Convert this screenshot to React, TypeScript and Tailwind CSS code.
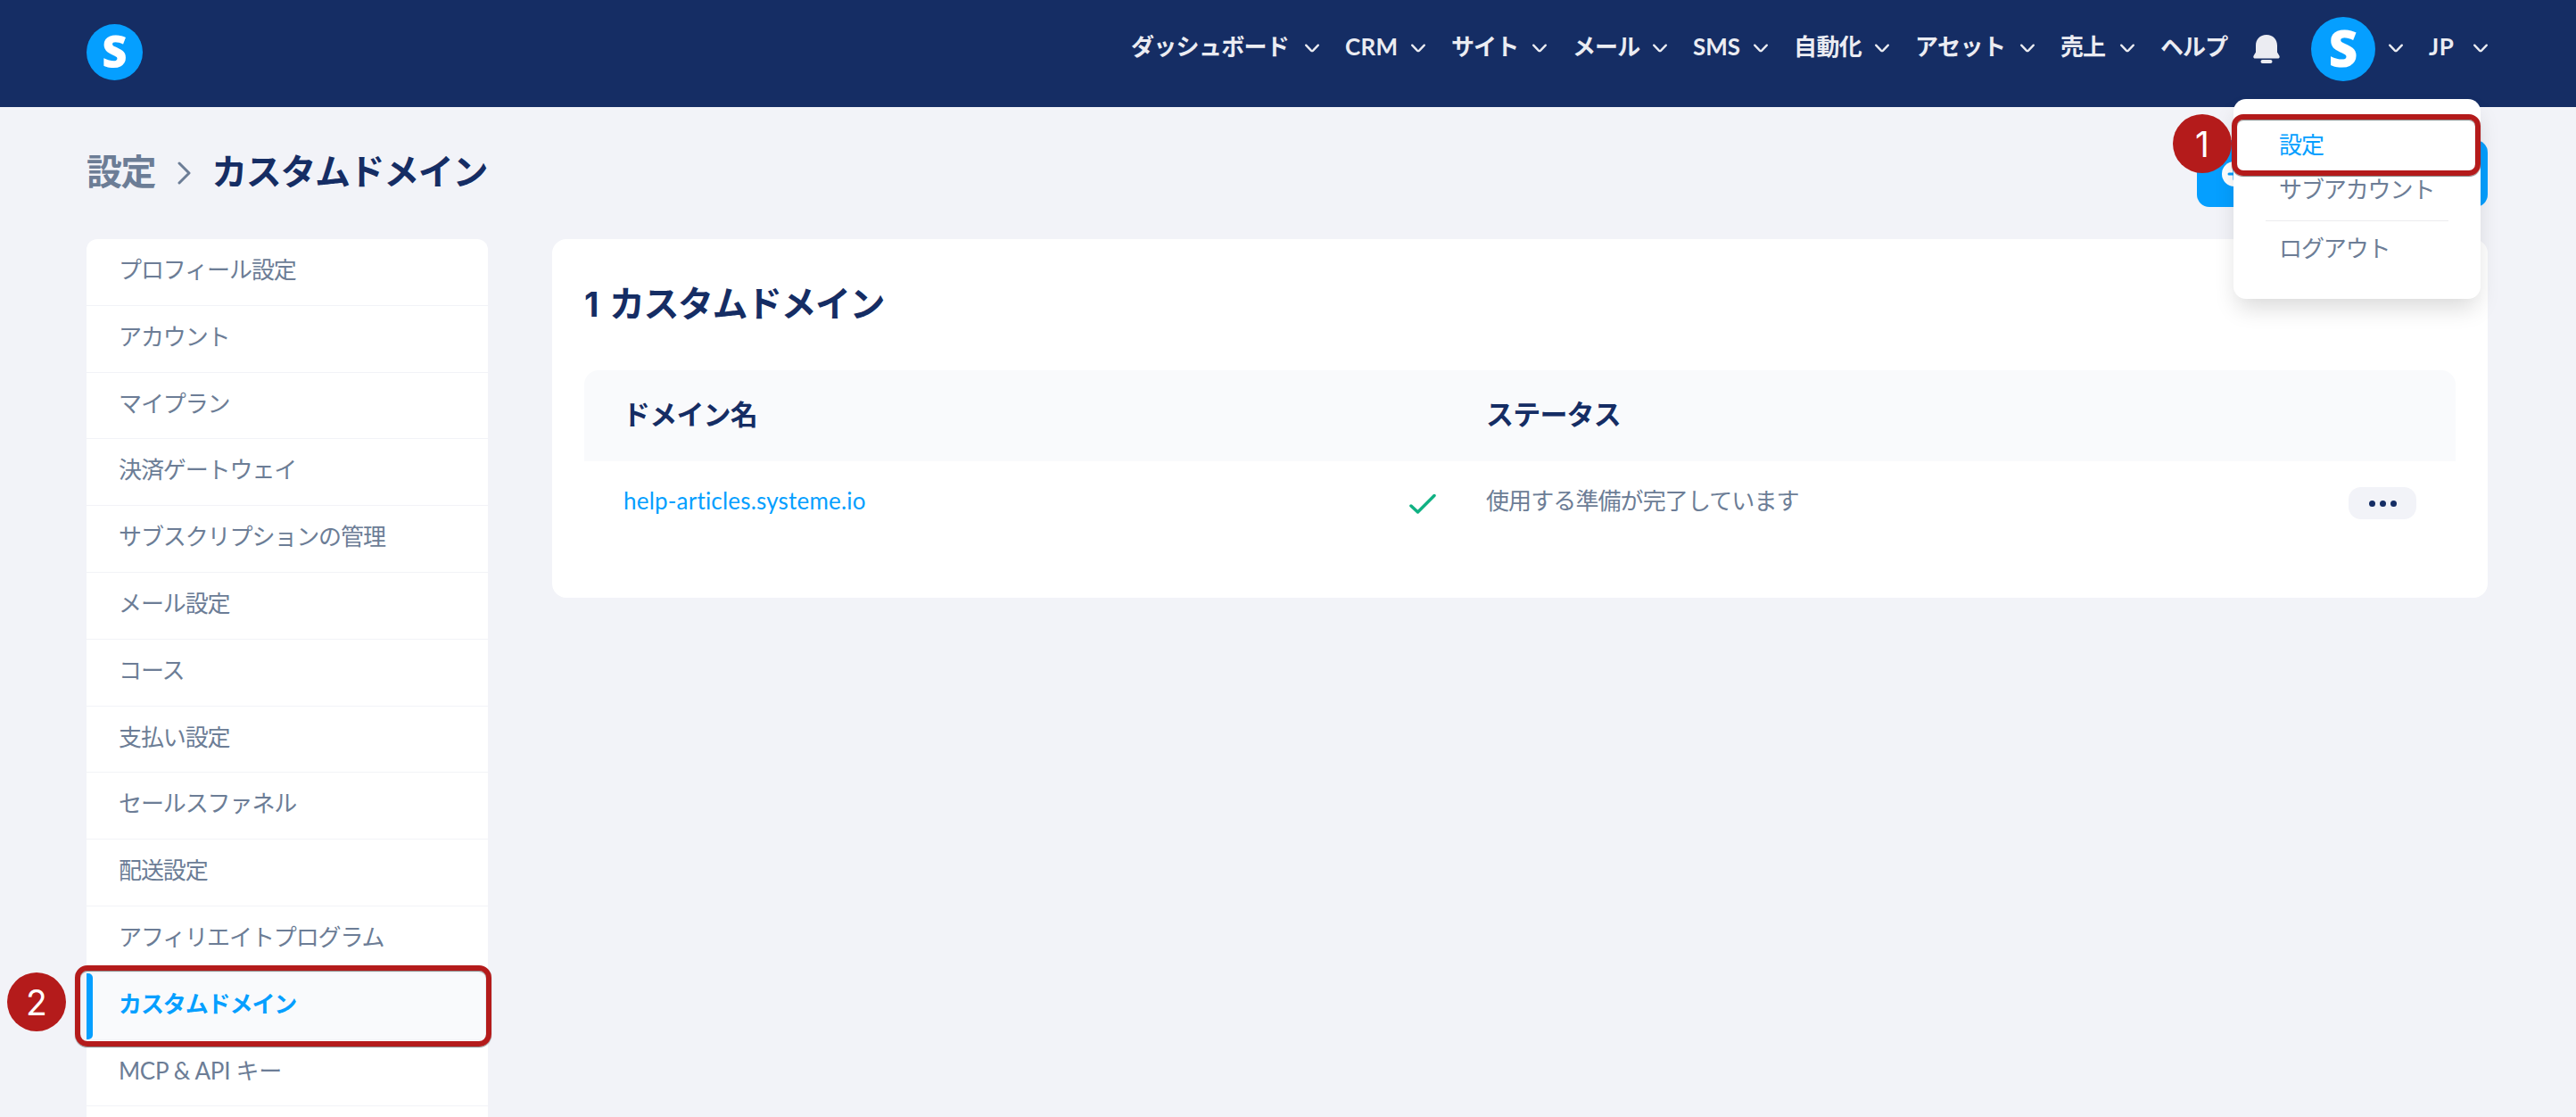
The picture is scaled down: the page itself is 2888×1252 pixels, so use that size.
const navItems = [
    { label: "ダッシュボード", width: "w-[211px]", text: "tracking-[-0.7px]" },
    { label: "CRM", width: "w-[90px]", text: "tracking-[0.3px]" },
    { label: "サイト", width: "w-[107px]", text: "" },
    { label: "メール", width: "w-[106px]", text: "" },
    { label: "SMS", width: "w-[84px]", text: "tracking-normal" },
    { label: "自動化", width: "w-[107px]", text: "tracking-[-0.6px]" },
    { label: "アセット", width: "w-[134px]", text: "tracking-[-0.5px]" },
    { label: "売上", width: "w-[83px]", text: "" },
];

const sidebarItems = [
    "プロフィール設定",
    "アカウント",
    "マイプラン",
    "決済ゲートウェイ",
    "サブスクリプションの管理",
    "メール設定",
    "コース",
    "支払い設定",
    "セールスファネル",
    "配送設定",
    "アフィリエイトプログラム",
    "カスタムドメイン",
    "MCP & API キー",
];

const activeItem = "カスタムドメイン";

const Chevron = () => (
    <svg className="mt-1 h-2.5 w-4 shrink-0" viewBox="0 0 16 10" fill="none" stroke="currentColor" strokeWidth="2.3" strokeLinecap="round" strokeLinejoin="round">
        <path d="M1.2 1.6 L6.9 7.6 Q8 8.7 9.1 7.6 L14.8 1.6" />
    </svg>
);

const Bell = () => (
    <svg className="h-8 w-[30px]" viewBox="0 0 30 32" fill="currentColor">
        <path d="M15 0C7.6 0 3 5.4 3 12v7.4L.6 23.6C-.2 25.3.6 26.6 2.4 26.6h25.2c1.8 0 2.6-1.3 1.8-3L27 19.4V12C27 5.4 22.4 0 15 0Z" />
        <rect x="8.5" y="28" width="13" height="4" rx="2" />
    </svg>
);

const Logo = ({ className }: { className: string }) => (
    <div className={`flex shrink-0 justify-center rounded-full bg-[#059fff] font-['Open_Sans',sans-serif] font-extrabold tracking-normal text-white ${className}`}>
        S
    </div>
);

const StepBadge = ({ step, className }: { step: number; className: string }) => (
    <div className={`absolute z-30 flex size-[66px] items-center justify-center rounded-full bg-[#b41b1b] font-[Inter,sans-serif] text-[39px] leading-none tracking-normal text-white ${className}`}>
        {step}
    </div>
);

const UserMenu = () => (
    <div className="absolute top-[111px] right-[107px] z-20 h-[224px] w-[277px] rounded-[14px] bg-white pt-[34px] tracking-[-1.1px] text-[#6c7d96] shadow-[0_14px_26px_-4px_rgba(0,0,0,0.15)]">
        <div className="h-[34px] pl-[51px] leading-[34px] text-[#059fff]">設定</div>
        <div className="mt-4 h-[34px] pl-[51px] leading-[34px]">サブアカウント</div>
        <div className="mx-9 mt-[18px] h-px bg-[#ebecee]" />
        <div className="mt-[13px] h-[34px] pl-[51px] leading-[34px]">ログアウト</div>
        <div className="absolute top-[17px] -left-0.5 h-[69px] w-[279px] rounded-[13px] border-6 border-[#b41b1b] shadow-[0_1px_1px_rgba(0,0,0,0.5),inset_0_1px_1px_rgba(0,0,0,0.5)]" />
        <StepBadge step={1} className="top-[17px] -left-[68px]" />
    </div>
);

const Header = () => (
    <header className="relative flex h-[120px] items-start justify-between bg-[#152d64] pr-[99px] pl-[97px]">
        <Logo className="mt-[27px] size-[63px] text-[49px] leading-[61px]" />
        <nav className="flex h-[104px] items-center text-[26px] font-bold tracking-[-0.9px] text-[#ebecf2]">
            <div className="flex gap-[29px]">
                {navItems.map(item => (
                    <div key={item.label} className={`flex items-center justify-between whitespace-nowrap ${item.width}`}>
                        <span className={item.text}>{item.label}</span>
                        <Chevron />
                    </div>
                ))}
            </div>
            <span className="ml-[29px] w-[104px] whitespace-nowrap">ヘルプ</span>
            <div className="mt-1.5"><Bell /></div>
            <Logo className="mt-1.5 mr-[15px] ml-[35px] size-[72px] text-[57px] leading-[68px]" />
            <Chevron />
            <span className="ml-[29px] w-[50px] tracking-[0.5px]">JP</span>
            <Chevron />
        </nav>
        <UserMenu />
    </header>
);

const Sidebar = () => (
    <aside className="h-[984px] w-[450px] shrink-0 overflow-hidden rounded-t-[12px] bg-white tracking-[-1.1px]">
        {sidebarItems.map(item => {
            const active = item === activeItem;
            return (
                <div key={item} className={`flex h-[74.8px] border-b border-[#f2f3f7] ${active ? "bg-[#f9fafc] font-bold text-[#059fff]" : ""}`}>
                    <div className={`h-full w-[7px] rounded-r-[5px] ${active ? "bg-[#059fff]" : ""}`} />
                    <span className={`pl-[29px] leading-[68px] whitespace-nowrap ${item.startsWith("MCP") ? "tracking-[-0.3px]" : ""}`}>{item}</span>
                </div>
            );
        })}
    </aside>
);

const DomainsCard = () => (
    <section className="h-[402px] flex-1 rounded-[16px] bg-white px-9 pt-[46px]">
        <h2 className="h-[52px] text-[40px] leading-[52px] font-bold tracking-[-1.5px] whitespace-nowrap text-[#152d64]">
            <span className="mr-2 inline-block w-5 font-[Inter,sans-serif] text-[38px]">1</span>
            カスタムドメイン
        </h2>
        <div className="mt-[49px] flex h-[102px] items-center rounded-t-[16px] bg-[#f9fafc] text-[31px] font-bold tracking-[-0.8px] text-[#152d64]">
            <div className="w-[1011px] pb-1 pl-[43px]">ドメイン名</div>
            <div className="pb-1">ステータス</div>
        </div>
        <div className="flex h-[94px] items-center pr-11 pl-11">
            <a className="w-[881px] pb-1.5 tracking-[0.2px] text-[#059fff]">help-articles.systeme.io</a>
            <svg className="mt-0.5 h-6 w-[30px]" viewBox="0 0 30 24" fill="none" stroke="#10b183" strokeWidth="3.5" strokeLinecap="round" strokeLinejoin="round">
                <path d="M2 14 L9.5 21 L28 2.5" />
            </svg>
            <span className="flex-1 pb-1.5 pl-[56px]">使用する準備が完了しています</span>
            <button className="flex h-9 w-[76px] items-center justify-center gap-[5px] rounded-[14px] bg-[#f2f3f8]">
                <span className="size-[7px] rounded-full bg-[#152d64]" />
                <span className="size-[7px] rounded-full bg-[#152d64]" />
                <span className="size-[7px] rounded-full bg-[#152d64]" />
            </button>
        </div>
    </section>
);

const App = () => {
    return (
        <div className="relative h-[1252px] w-[2888px] overflow-hidden bg-[#f2f3f8] font-[Lato,'Noto_Sans_CJK_JP',sans-serif] text-[26px] tracking-[-0.9px] text-[#6c7d96]">
            <Header />
            <div className="flex h-[148px] justify-between pr-[99px] pl-[97px]">
                <div className="flex h-[144px] items-center text-[40px] font-bold tracking-[-1.4px]">
                    <span>設定</span>
                    <svg className="mt-1 mr-[22px] ml-[25px] h-7 w-4" viewBox="0 0 16 28" fill="none" stroke="currentColor" strokeWidth="3" strokeLinecap="round" strokeLinejoin="round">
                        <path d="M2 3 L13 14 L2 25" />
                    </svg>
                    <h1 className="text-[#152d64]">カスタムドメイン</h1>
                </div>
                <button className="mt-[37px] flex h-[75px] w-[326px] items-center rounded-[14px] bg-[#059fff] pl-7">
                    <svg className="size-7" viewBox="0 0 28 28">
                        <circle cx="14" cy="14" r="14" fill="#fff" />
                        <path d="M14 8v12M8 14h12" stroke="#059fff" strokeWidth="3" strokeLinecap="round" />
                    </svg>
                </button>
            </div>
            <main className="flex gap-[72px] pr-[99px] pl-[97px]">
                <Sidebar />
                <DomainsCard />
            </main>
            <div className="absolute top-[1082px] left-[84px] h-[91px] w-[467px] rounded-[14px] border-6 border-[#b41b1b] shadow-[0_1px_1px_rgba(0,0,0,0.5),inset_0_1px_1px_rgba(0,0,0,0.5)]" />
            <StepBadge step={2} className="top-[1090px] left-2" />
        </div>
    );
};

export default App;
